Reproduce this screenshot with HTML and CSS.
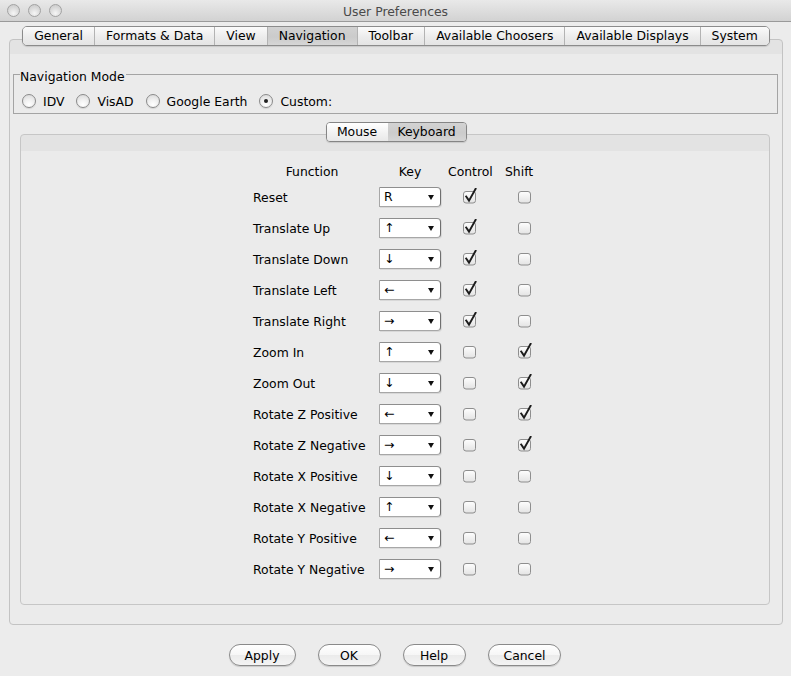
FILE: index.html
```html
<!DOCTYPE html>
<html>
<head>
<meta charset="utf-8">
<title>User Preferences</title>
<link rel="stylesheet" href="styles.css">
</head>
<body>
<svg class="defs" width="0" height="0">
  <defs>
    <linearGradient id="boxg" x1="0" y1="0" x2="0" y2="1">
      <stop offset="0" stop-color="#fefefe"/>
      <stop offset="1" stop-color="#e3e3e3"/>
    </linearGradient>
    <symbol id="cb-off" viewBox="0 0 16 16">
      <rect x="1.5" y="3.5" width="12" height="11.5" rx="2.5" fill="url(#boxg)" stroke="#8e8e8e"/>
    </symbol>
    <symbol id="cb-on" viewBox="0 0 16 16">
      <rect x="1.5" y="3.5" width="12" height="11.5" rx="2.5" fill="url(#boxg)" stroke="#8e8e8e"/>
      <path d="M4.2 8.6 L7 12.6 L13.6 0.8" fill="none" stroke="#1c1c1c" stroke-width="1.9" stroke-linejoin="miter" stroke-linecap="square"/>
    </symbol>
  </defs>
</svg>
<div class="window">
  <header class="titlebar">
    <div class="lights"><span class="light"></span><span class="light"></span><span class="light"></span></div>
    <div class="title">User Preferences</div>
    <div></div>
  </header>
  <main class="content">
    <nav class="tabstrip">
      <div class="tabs">
        <span class="tab">General</span>
        <span class="tab">Formats &amp; Data</span>
        <span class="tab">View</span>
        <span class="tab on">Navigation</span>
        <span class="tab">Toolbar</span>
        <span class="tab">Available Choosers</span>
        <span class="tab">Available Displays</span>
        <span class="tab">System</span>
      </div>
    </nav>
    <section class="pane">
      <div class="group">
        <div class="group-title">Navigation Mode</div>
        <div class="radios">
          <label class="ropt"><span class="radio"></span>IDV</label>
          <label class="ropt"><span class="radio"></span>VisAD</label>
          <label class="ropt"><span class="radio"></span>Google Earth</label>
          <label class="ropt"><span class="radio sel"></span>Custom:</label>
        </div>
      </div>
      <div class="seg-wrap">
        <div class="seg"><span class="seg-item">Mouse</span><span class="seg-item on">Keyboard</span></div>
      </div>
      <div class="panel">
        <div class="grid">
          <div class="h h-func">Function</div>
          <div class="h h-key">Key</div>
          <div class="h h-ctrl">Control</div>
          <div class="h h-shift">Shift</div>

          <div class="lbl">Reset</div>
          <div class="combo"><span class="val">R</span><span class="arr"></span></div>
          <svg class="cb c-ctrl"><use href="#cb-on"/></svg>
          <svg class="cb c-shift"><use href="#cb-off"/></svg>

          <div class="lbl">Translate Up</div>
          <div class="combo"><span class="val">↑</span><span class="arr"></span></div>
          <svg class="cb c-ctrl"><use href="#cb-on"/></svg>
          <svg class="cb c-shift"><use href="#cb-off"/></svg>

          <div class="lbl">Translate Down</div>
          <div class="combo"><span class="val">↓</span><span class="arr"></span></div>
          <svg class="cb c-ctrl"><use href="#cb-on"/></svg>
          <svg class="cb c-shift"><use href="#cb-off"/></svg>

          <div class="lbl">Translate Left</div>
          <div class="combo"><span class="val">←</span><span class="arr"></span></div>
          <svg class="cb c-ctrl"><use href="#cb-on"/></svg>
          <svg class="cb c-shift"><use href="#cb-off"/></svg>

          <div class="lbl">Translate Right</div>
          <div class="combo"><span class="val">→</span><span class="arr"></span></div>
          <svg class="cb c-ctrl"><use href="#cb-on"/></svg>
          <svg class="cb c-shift"><use href="#cb-off"/></svg>

          <div class="lbl">Zoom In</div>
          <div class="combo"><span class="val">↑</span><span class="arr"></span></div>
          <svg class="cb c-ctrl"><use href="#cb-off"/></svg>
          <svg class="cb c-shift"><use href="#cb-on"/></svg>

          <div class="lbl">Zoom Out</div>
          <div class="combo"><span class="val">↓</span><span class="arr"></span></div>
          <svg class="cb c-ctrl"><use href="#cb-off"/></svg>
          <svg class="cb c-shift"><use href="#cb-on"/></svg>

          <div class="lbl">Rotate Z Positive</div>
          <div class="combo"><span class="val">←</span><span class="arr"></span></div>
          <svg class="cb c-ctrl"><use href="#cb-off"/></svg>
          <svg class="cb c-shift"><use href="#cb-on"/></svg>

          <div class="lbl">Rotate Z Negative</div>
          <div class="combo"><span class="val">→</span><span class="arr"></span></div>
          <svg class="cb c-ctrl"><use href="#cb-off"/></svg>
          <svg class="cb c-shift"><use href="#cb-on"/></svg>

          <div class="lbl">Rotate X Positive</div>
          <div class="combo"><span class="val">↓</span><span class="arr"></span></div>
          <svg class="cb c-ctrl"><use href="#cb-off"/></svg>
          <svg class="cb c-shift"><use href="#cb-off"/></svg>

          <div class="lbl">Rotate X Negative</div>
          <div class="combo"><span class="val">↑</span><span class="arr"></span></div>
          <svg class="cb c-ctrl"><use href="#cb-off"/></svg>
          <svg class="cb c-shift"><use href="#cb-off"/></svg>

          <div class="lbl">Rotate Y Positive</div>
          <div class="combo"><span class="val">←</span><span class="arr"></span></div>
          <svg class="cb c-ctrl"><use href="#cb-off"/></svg>
          <svg class="cb c-shift"><use href="#cb-off"/></svg>

          <div class="lbl">Rotate Y Negative</div>
          <div class="combo"><span class="val">→</span><span class="arr"></span></div>
          <svg class="cb c-ctrl"><use href="#cb-off"/></svg>
          <svg class="cb c-shift"><use href="#cb-off"/></svg>
        </div>
      </div>
    </section>
    <div class="buttons">
      <button class="btn">Apply</button>
      <button class="btn">OK</button>
      <button class="btn">Help</button>
      <button class="btn">Cancel</button>
    </div>
  </main>
</div>
</body>
</html>
```

FILE: styles.css
```css
* { box-sizing: border-box; }
html, body { margin: 0; padding: 0; }
body {
  width: 791px;
  height: 676px;
  overflow: hidden;
  background: #ececec;
  font-family: "DejaVu Sans", sans-serif;
  font-size: 12.4px;
  color: #000;
}
.defs { display: block; width: 0; height: 0; overflow: hidden; }

.window { width: 791px; height: 676px; background: #ececec; }

.titlebar {
  height: 22px;
  display: grid;
  grid-template-columns: 1fr auto 1fr;
  align-items: center;
  background: linear-gradient(#e9e9e9, #d2d2d2);
  border-bottom: 1px solid #9a9a9a;
}
.lights { display: flex; gap: 8px; padding-left: 7px; }
.light {
  width: 13px; height: 13px; border-radius: 50%;
  border: 1px solid #a2a2a2;
  background: radial-gradient(circle at 50% 75%, #f6f6f6 0, #dadada 55%, #c6c6c6 100%);
}
.title { font-size: 12.4px; color: #4a4a4a; padding-top: 1px; }

.content { padding: 4px 8px 0 9px; }

.tabstrip {
  display: flex;
  justify-content: center;
  position: relative;
  z-index: 1;
  margin-bottom: -7px;
}
.tabs {
  display: flex;
  border: 1px solid #8b8b8b;
  border-radius: 5px;
  overflow: hidden;
  box-shadow: 0 1px 1px rgba(0,0,0,0.12);
}
.tab {
  height: 18px;
  line-height: 18px;
  padding: 0 11px;
  background: linear-gradient(#fbfbfb, #ececec 55%, #e4e4e4);
  border-left: 1px solid #b3b3b3;
  white-space: nowrap;
}
.tab:first-child { border-left: none; }
.tab.on { background: linear-gradient(#d2d2d2, #cbcbcb 55%, #d6d6d6); }

.pane {
  height: 586px;
  border: 1px solid #c3c3c3;
  border-radius: 4px;
  background: linear-gradient(#e3e3e3 0, #e3e3e3 14px, #ebebeb 14px);
  padding: 34px 3px 0 3px;
}

.group {
  height: 40px;
  border: 1px solid #a4a4a4;
  margin-right: 1px;
}
.group-title {
  width: fit-content;
  margin: -5px 0 0 6px;
  line-height: 14px;
  padding-right: 1px;
  background: #ebebeb;
}
.radios {
  display: flex;
  align-items: center;
  gap: 12px;
  height: 16px;
  margin-top: 9px;
  padding-left: 8px;
}
.ropt { display: flex; align-items: center; gap: 7px; }
.radio {
  width: 14px; height: 14px; border-radius: 50%;
  border: 1px solid #8a8a8a;
  background: radial-gradient(circle at 50% 80%, #ffffff 0, #f0f0f0 45%, #d6d6d6 100%);
  box-shadow: 0 1px 1px rgba(0,0,0,0.1);
  display: flex; align-items: center; justify-content: center;
}
.radio.sel::after {
  content: "";
  width: 4px; height: 4px; border-radius: 50%;
  background: #222;
}

.seg-wrap {
  display: flex;
  justify-content: center;
  position: relative;
  z-index: 1;
  margin-top: 8px;
  margin-bottom: -8px;
}
.seg {
  display: flex;
  border: 1px solid #858585;
  border-radius: 4px;
  overflow: hidden;
  box-shadow: 0 1px 1px rgba(0,0,0,0.12);
}
.seg-item {
  height: 18px;
  line-height: 18px;
  padding: 0 9px;
  background: linear-gradient(#ffffff, #f2f2f2 55%, #e8e8e8);
}
.seg-item:first-child { width: 61px; text-align: center; }
.seg-item.on { width: 78px; text-align: center; background: linear-gradient(#d3d3d3, #cbcbcb 55%, #d5d5d5); }

.panel {
  height: 471px;
  margin: 0 9px 0 7px;
  border: 1px solid #c6c6c6;
  border-radius: 4px;
  background: linear-gradient(#e3e3e3 0, #e3e3e3 16px, #ebebeb 16px);
  padding-top: 33px;
}
.grid {
  display: grid;
  justify-content: center;
  grid-template-columns: 126px 62px 64px 30px;
  grid-template-rows: 8px;
  grid-auto-rows: 20px;
  row-gap: 11px;
  align-items: center;
  padding-right: 2px;
}
.h { line-height: 8px; height: 8px; white-space: nowrap; }
.h-func { text-align: center; padding-right: 8px; }
.h-key { text-align: center; }
.h-ctrl { padding-left: 7px; }
.h-shift { padding-left: 0; }
.lbl { white-space: nowrap; }

.combo {
  height: 20px;
  display: flex;
  background: #fff;
  border: 1px solid #a7a7a7;
  border-top-color: #8e8e8e;
  border-right-color: #6f6f6f;
  border-radius: 0 4px 4px 0;
  box-shadow: 1px 1px 0 rgba(0,0,0,0.08);
}
.combo .val { flex: 1; padding-left: 4px; line-height: 18px; }
.combo .arr {
  width: 17px;
  display: flex; align-items: center; justify-content: center;
}
.combo .arr::after {
  content: "";
  width: 0; height: 0;
  border-left: 3.5px solid transparent;
  border-right: 3.5px solid transparent;
  border-top: 5px solid #111;
  margin-right: 2px;
}

.cb { width: 16px; height: 16px; margin-top: -3px; }
.c-ctrl { margin-left: 21px; }
.c-shift { margin-left: 12px; }

.buttons {
  display: flex;
  justify-content: center;
  gap: 22px;
  margin-top: 19px;
  padding-right: 2px;
}
.btn {
  height: 22px;
  min-width: 63px;
  padding: 0 15px;
  font-family: "DejaVu Sans", sans-serif;
  font-size: 12.4px;
  color: #000;
  border: 1px solid #8a8a8a;
  border-radius: 11px;
  background: linear-gradient(#ffffff, #f6f6f6 50%, #ebebeb 51%, #f4f4f4);
  box-shadow: 0 1px 1px rgba(0,0,0,0.15);
}
```
